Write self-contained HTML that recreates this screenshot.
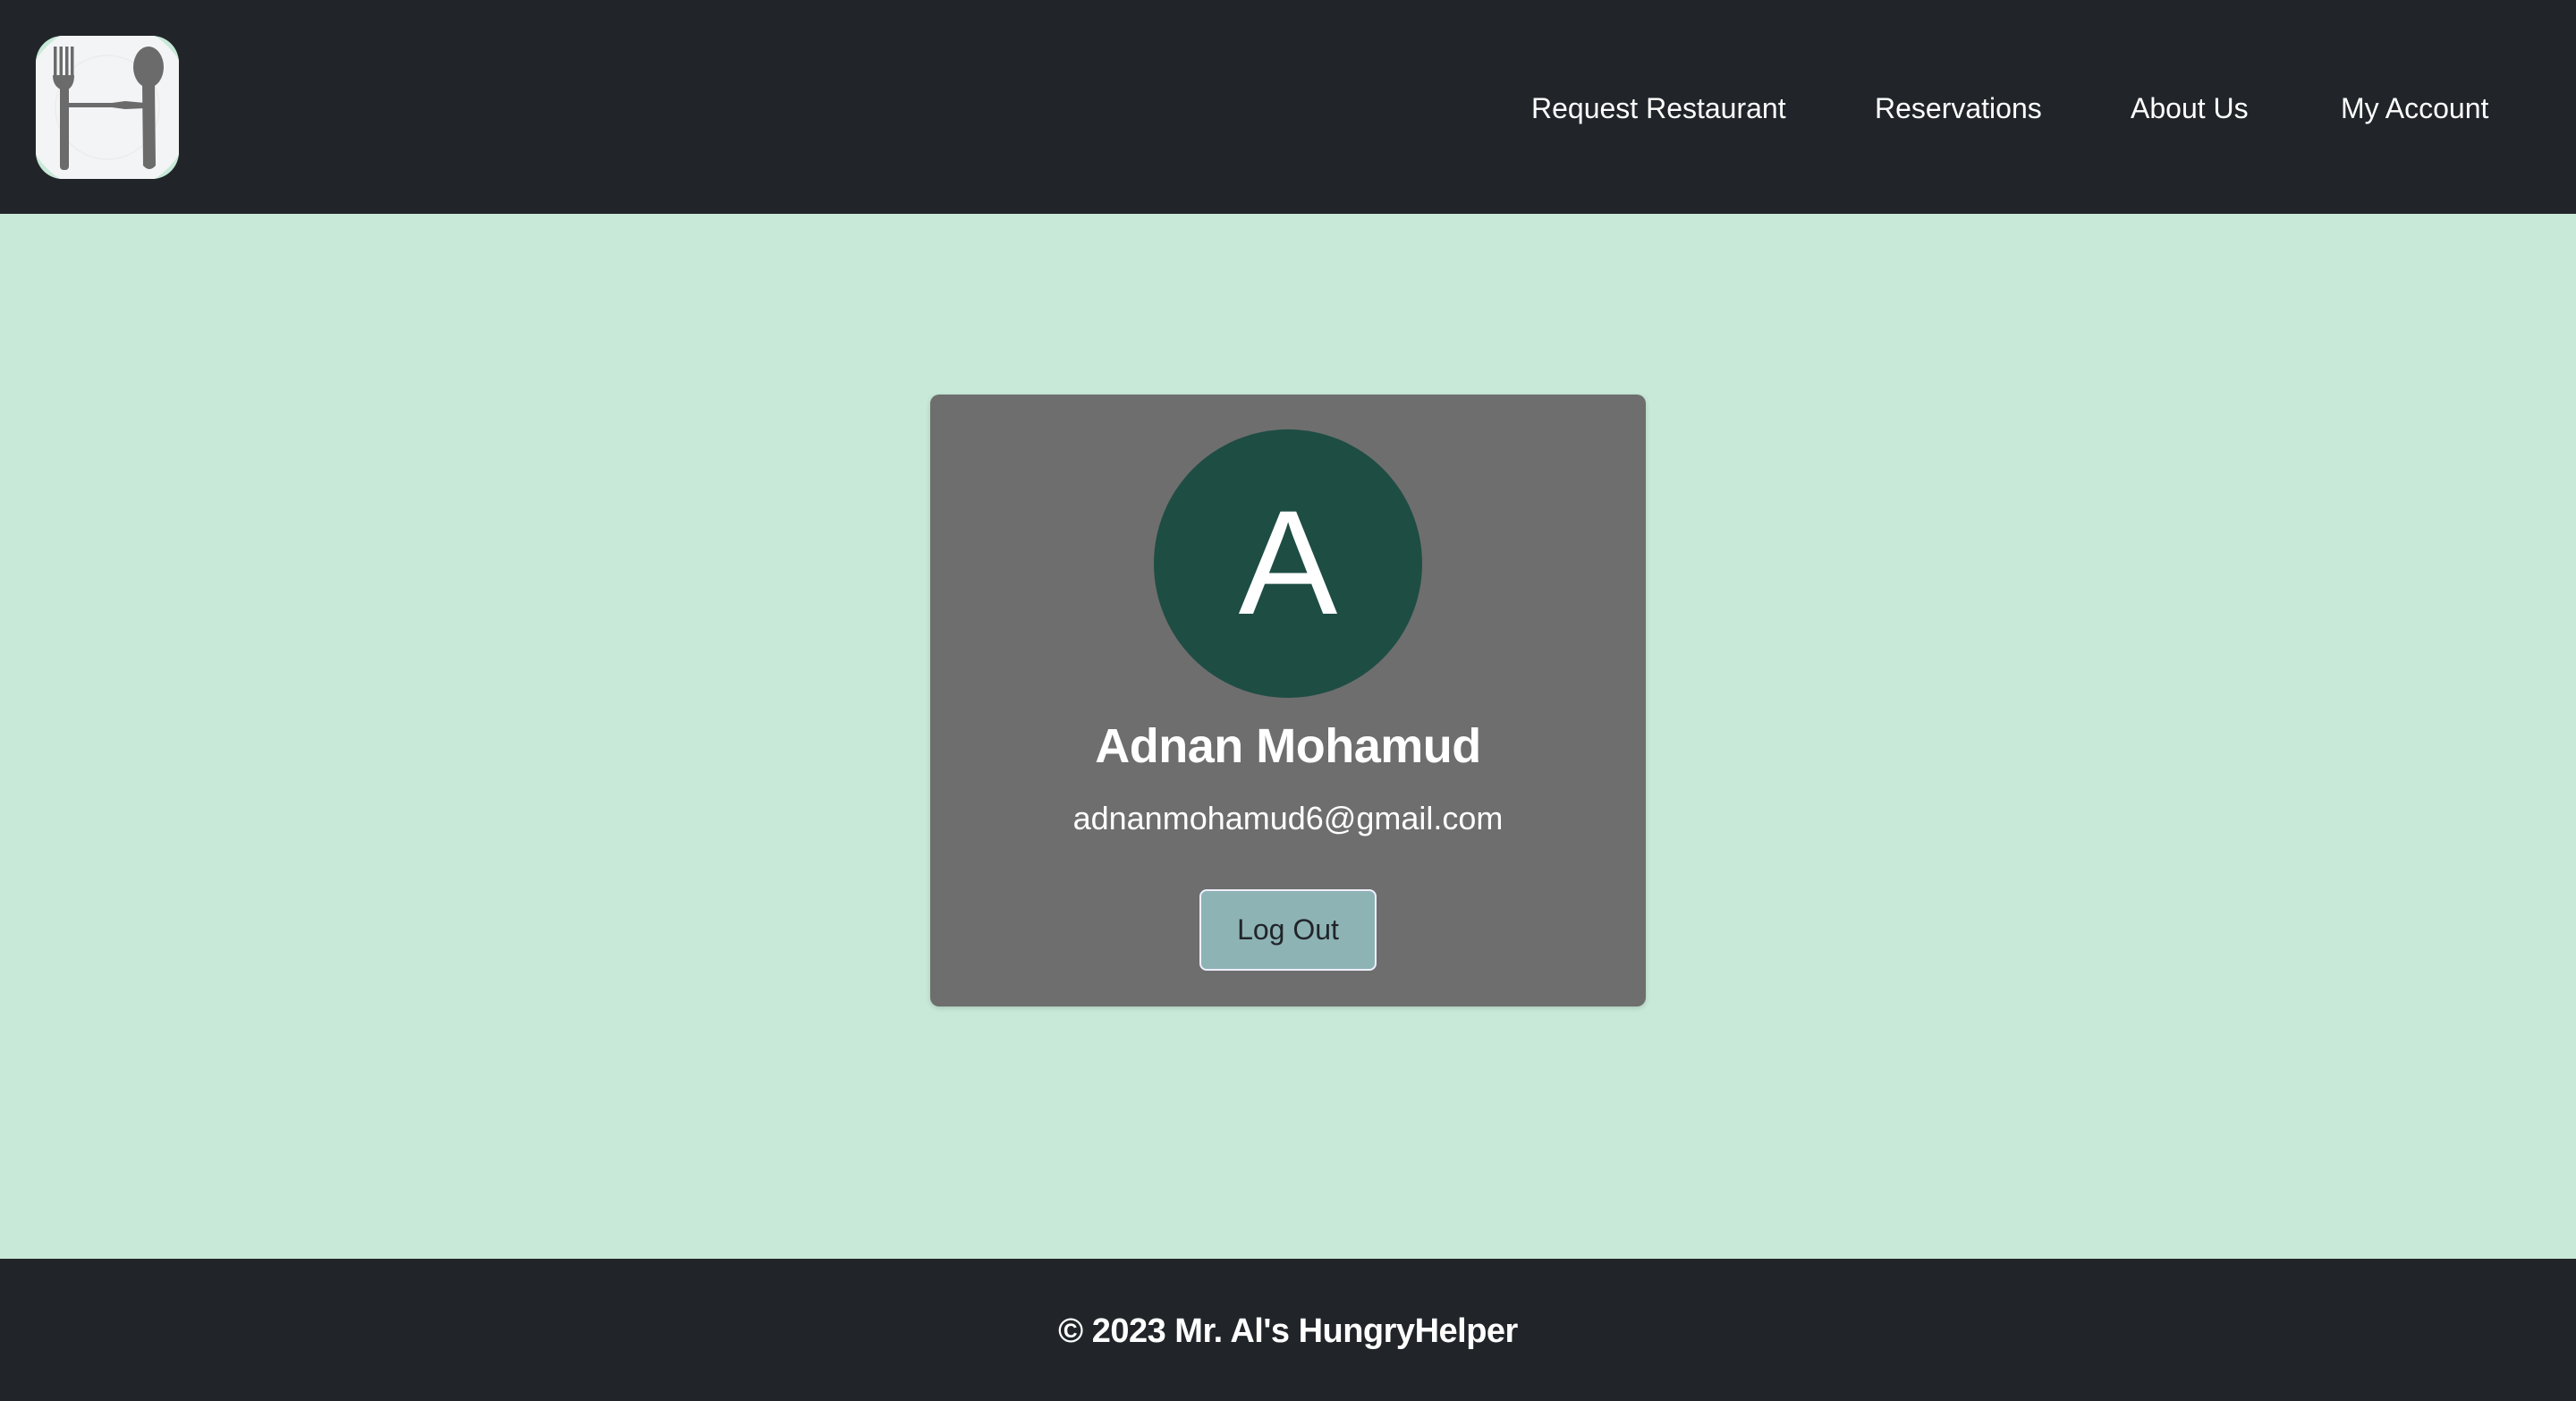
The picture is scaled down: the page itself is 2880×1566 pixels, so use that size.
<!DOCTYPE html>
<html><head><meta charset="utf-8">
<style>
*{margin:0;padding:0;box-sizing:border-box}
html,body{width:2880px;height:1566px;overflow:hidden;font-family:"Liberation Sans",sans-serif;background:#c8e9d8}
header{position:absolute;left:0;top:0;width:2880px;height:239px;background:#212529}
.logo{position:absolute;left:40px;top:40px;width:160px;height:160px}
nav a{position:absolute;top:100px;color:#fff;font-size:32px;line-height:42px;text-decoration:none;white-space:nowrap}
.card{position:absolute;left:1040px;top:441px;width:800px;height:684px;background:#6e6e6e;border-radius:10px;box-shadow:0 2px 6px rgba(0,0,0,.15)}
.av{position:absolute;left:250px;top:39px;width:300px;height:300px;border-radius:50%;background:#1e4d43;color:#fff;font-size:166px;line-height:300px;text-align:center}
.name{position:absolute;left:0;width:800px;top:358px;text-align:center;color:#fff;font-size:54px;line-height:70px;font-weight:bold;letter-spacing:-0.5px}
.email{position:absolute;left:0;width:800px;top:450px;text-align:center;color:#fff;font-size:36px;line-height:48px}
.btn{position:absolute;left:301px;top:553px;width:198px;height:91px;background:#8db3b5;border:2px solid #eef;border-radius:8px;color:#212529;font-size:32px;line-height:87px;text-align:center}
footer{position:absolute;left:0;top:1407px;width:2880px;height:159px;background:#212529;color:#fff;font-weight:bold;font-size:38px;text-align:center;line-height:40px;padding-top:61px;letter-spacing:-0.5px}
</style></head><body>
<header>
<svg class="logo" viewBox="0 0 160 160">
<defs><clipPath id="c"><rect width="160" height="160" rx="30"/></clipPath></defs>
<g clip-path="url(#c)">
<rect width="160" height="160" fill="#c8e9d8"/>
<circle cx="80" cy="80" r="96" fill="#f3f4f6"/>
<circle cx="80" cy="80" r="58" fill="none" stroke="#ececec" stroke-width="1.5"/>
<g fill="#6b6b6b">
<rect x="20" y="12" width="3.5" height="34"/><rect x="26.5" y="12" width="3.5" height="34"/><rect x="33" y="12" width="3.5" height="34"/><rect x="39" y="12" width="3.5" height="34"/>
<path d="M19 44 Q19 56 28 60 L36 60 Q43 56 43 44 Z"/>
<rect x="27" y="56" width="10" height="94" rx="4"/>
<ellipse cx="126" cy="35" rx="17" ry="23"/>
<path d="M119 52 L133 52 L134 145 Q127 153 120 145 Z"/>
<path d="M35 75 L85 75 L100 73 L122 75 L122 81 L100 82 L85 80 L35 80 Z"/>
</g></g></svg>
<nav>
<a style="left:1712px">Request Restaurant</a>
<a style="left:2096px">Reservations</a>
<a style="left:2382px">About Us</a>
<a style="left:2617px">My Account</a>
</nav>
</header>
<div class="card">
<div class="av">A</div>
<div class="name">Adnan Mohamud</div>
<div class="email">adnanmohamud6@gmail.com</div>
<div class="btn">Log Out</div>
</div>
<footer>© 2023 Mr. Al's HungryHelper</footer>
</body></html>
